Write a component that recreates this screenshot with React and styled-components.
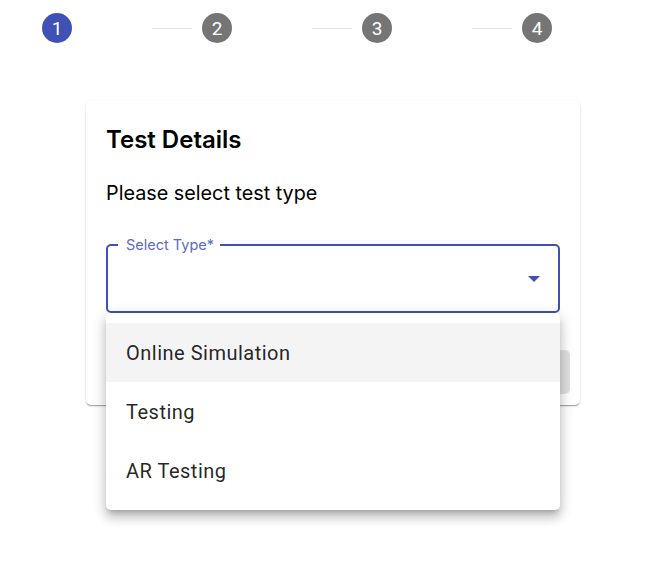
import React from "react";
import styled, { createGlobalStyle } from "styled-components";

const Global = createGlobalStyle`
  html, body { margin: 0; padding: 0; background: #ffffff; }
  body { font-family: Roboto, "Liberation Sans", Arial, sans-serif; color: rgba(0,0,0,0.87); }
`;

const Page = styled.div`
  width: 654px;
  height: 573px;
  overflow: hidden;
  padding-top: 13px;
  box-sizing: border-box;
`;

const Stepper = styled.div`
  display: flex;
  align-items: center;
  padding-left: 42px;
`;

const StepCircle = styled.div`
  width: 30px;
  height: 30px;
  border-radius: 50%;
  background: ${(p) => (p.$active ? "#3f51b5" : "#757575")};
  color: #fff;
  font-size: 19px;
  line-height: 1;
  display: flex;
  align-items: center;
  justify-content: center;
  flex-shrink: 0;
`;

const Connector = styled.div`
  width: 40px;
  height: 1px;
  background: #e3e3e3;
  margin: 0 10px 0 80px;
`;

const Card = styled.div`
  position: relative;
  margin: 58px 0 0 86px;
  width: 494px;
  background: #fff;
  border-radius: 5px;
  box-shadow: 0px 2px 1px -1px rgba(0,0,0,0.2), 0px 1px 1px 0px rgba(0,0,0,0.14), 0px 1px 3px 0px rgba(0,0,0,0.12);
`;

const Content = styled.div`
  padding: 20px 20px 0 20px;
`;

const Title = styled.div`
  font-family: Inter, Roboto, sans-serif;
  font-size: 24px;
  font-weight: 600;
  line-height: 38px;
  color: #000;
`;

const Subtitle = styled.div`
  font-family: Inter, Roboto, sans-serif;
  font-size: 19.8px;
  line-height: 30px;
  margin-top: 19px;
  color: #000;
`;

const Field = styled.div`
  position: relative;
  margin-top: 36px;
  height: 69px;
  box-sizing: border-box;
  border: 2px solid #3f51b5;
  border-radius: 5px;
  display: flex;
  align-items: center;
  justify-content: flex-end;
  padding-right: 18px;
`;

const Legend = styled.span`
  position: absolute;
  top: -11px;
  left: 10px;
  padding: 0 6px 0 8px;
  background: #fff;
  font-family: Inter, Roboto, sans-serif;
  font-size: 14.5px;
  line-height: 20px;
  color: #5c6bc0;
`;

const Actions = styled.div`
  display: flex;
  justify-content: flex-end;
  padding: 37px 10px 11px 10px;
`;

const Button = styled.button`
  height: 44px;
  min-width: 80px;
  border: none;
  border-radius: 5px;
  background: #e0e0e0;
  color: rgba(0,0,0,0.26);
  font-family: Roboto, sans-serif;
  font-size: 17px;
  text-transform: uppercase;
`;

const Menu = styled.ul`
  position: absolute;
  left: 20px;
  top: 212px;
  width: 454px;
  margin: 0;
  padding: 10px 0;
  list-style: none;
  background: #fff;
  border-radius: 5px;
  box-shadow: 0px 5px 5px -3px rgba(0,0,0,0.2), 0px 8px 10px 1px rgba(0,0,0,0.14), 0px 3px 14px 2px rgba(0,0,0,0.12);
`;

const Item = styled.li`
  height: 59px;
  display: flex;
  align-items: center;
  padding-left: 20px;
  font-size: 20px;
  letter-spacing: 0.5px;
  color: rgba(0,0,0,0.87);
  background: ${(p) => (p.$selected ? "#f4f4f4" : "transparent")};
`;

const steps = [1, 2, 3, 4];
const options = ["Online Simulation", "Testing", "AR Testing"];

export default function App() {
  return (
    <Page>
      <Global />
      <Stepper>
        {steps.map((n, i) => (
          <React.Fragment key={n}>
            {i > 0 && <Connector />}
            <StepCircle $active={i === 0}>{n}</StepCircle>
          </React.Fragment>
        ))}
      </Stepper>
      <Card>
        <Content>
          <Title>Test Details</Title>
          <Subtitle>Please select test type</Subtitle>
          <Field>
            <Legend>Select Type*</Legend>
            <svg width="12" height="6" viewBox="0 0 12 6">
              <path d="M0 0 L12 0 L6 6 Z" fill="#3f51b5" />
            </svg>
          </Field>
        </Content>
        <Actions>
          <Button disabled>Next</Button>
        </Actions>
        <Menu>
          {options.map((o, i) => (
            <Item key={o} $selected={i === 0}>{o}</Item>
          ))}
        </Menu>
      </Card>
    </Page>
  );
}
